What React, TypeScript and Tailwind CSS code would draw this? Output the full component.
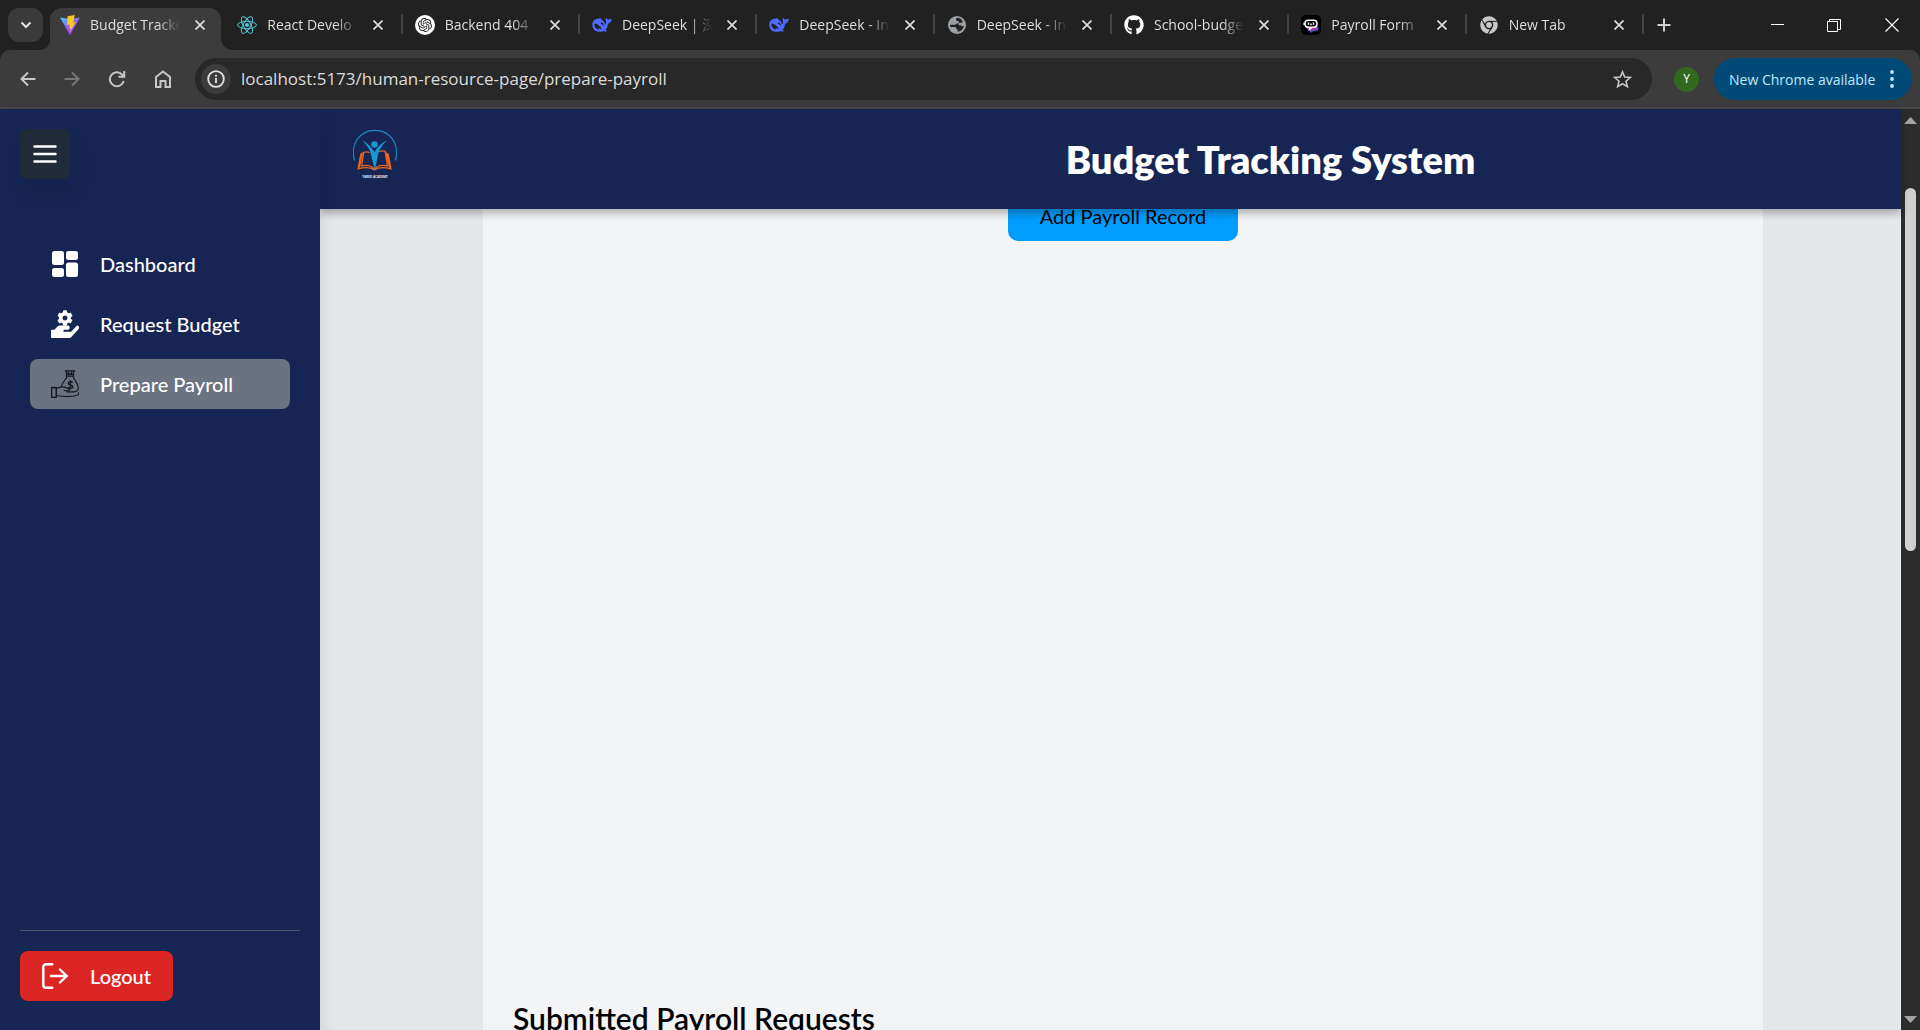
import React from "react";
import { FaChrome, FaCog, FaGithub, FaHandHolding } from "react-icons/fa";
import { SiOpenai } from "react-icons/si";

const ViteIcon = () => (
  <svg viewBox="0 0 20 20" className="size-5">
    <defs>
      <linearGradient id="viteBody" x1="0" y1="0" x2="0.6" y2="1">
        <stop offset="0" stopColor="#41d1ff" />
        <stop offset="0.5" stopColor="#8a6cf5" />
        <stop offset="1" stopColor="#bd34fe" />
      </linearGradient>
    </defs>
    <path d="M0 2.4 10 4l10-1.6L10 20Z" fill="url(#viteBody)" />
    <path d="M14.8 0 7.600 1.300 7 10l2.900-.5-.7 4.200 1.600-.5L9.900 17l5.800-10-2.600.5Z" fill="#ffc91f" />
  </svg>
);

const ReactIcon = () => (
  <svg viewBox="0 0 20 20" className="size-5" fill="none" stroke="#58c4dc" strokeWidth="1">
    <circle cx="10" cy="10" r="2" fill="#58c4dc" stroke="none" />
    <ellipse cx="10" cy="10" rx="9.4" ry="3.7" />
    <ellipse cx="10" cy="10" rx="9.4" ry="3.7" transform="rotate(60 10 10)" />
    <ellipse cx="10" cy="10" rx="9.4" ry="3.7" transform="rotate(120 10 10)" />
  </svg>
);

const OpenAiIcon = () => (
  <span className="flex size-5 items-center justify-center rounded-full bg-white">
    <SiOpenai className="size-[14px] text-[#202120]" />
  </span>
);

const WhaleIcon = () => (
  <svg viewBox="0 0 20 20" className="size-5" fill="none">
    <path
      d="M.3 9.500C.5 6 2.800 3.800 5.600 3.800c1-.1 1.500-.6 2.600-.6.700 0 .9.600.8 1.100 1.600.8 3.400 2.700 4.300 5 .6-.3.900-.9.700-1.900C13.500 5.600 13.500 4 14.200 2.800c.5 1 1.100 1.600 2 1.800 1-.1 2.200-.5 3.600-.9-.1 2.700-1.700 4.500-3.800 5.100-.1 2.600-1 4.600-2.400 6 .5.600 1.100 1 1.800 1.300-1.200.6-2.500.5-3.700-.1C7.700 18 .1 16.800.3 9.500Z"
      fill="#4d6bfe"
    />
    <path d="M2.400 8.600c3 .1 5.800 2.400 7.600 5.700-1.500-.2-2.500-1-3.200-1.300-.3 1-.2 1.400.2 1.900-2.800-.6-4.800-3.200-4.600-6.300Z" fill="#202120" />
    <path d="M8.800 8.200c1.500 0 2.500.9 2.600 2.100" stroke="#202120" strokeWidth="1.200" />
  </svg>
);

const GlobeIcon = () => (
  <svg viewBox="0 0 20 20" className="size-5">
    <circle cx="10" cy="10" r="9" fill="#9aa0a6" />
    <path d="M10.500 2.800c-1.500.7-1.800 1.600-1.300 2.500.6.900 2.200.5 2.800 1.300.5.900-.5 1.700-1.700 1.900-1.200.2-1.500 1-2.600 1.200H3c0 .8.200 1.500.4 2.200l4.400.1c1.500.1 1.200 1.800 2.200 2.200.9.400.6 1.400.6 2.600 3.300-.3 5.700-2.700 6.300-5.800-1 .3-2.100.3-2.900-.4-.9-.8-2.200-.2-2.600-1.200-.3-1 .8-1.600 2-1.600 1 .1 1.700-.2 2.300-.9C14.900 4.500 13 3.100 10.500 2.800Z" fill="#202120" />
  </svg>
);

const BotIcon = () => (
  <svg viewBox="0 0 20 20" className="size-5">
    <rect width="20" height="20" rx="5" fill="#000" />
    <path d="M6.500 12.500H18l-1 3-5 .8-3 1.700v-2.500l-2.500-.5Z" fill="#3b5bdb" />
    <path d="M5.500 11.500H17l-1.500 3-4.500.5-3 1.500v-2l-2-.5Z" fill="#c0369d" />
    <rect x="4" y="5.200" width="12" height="7" rx="3.200" fill="#000" stroke="#fff" strokeWidth="1.500" />
    <path d="M7.500 7.500v2.200M12.500 7.500v2.200M10 8.500v1.800" stroke="#fff" strokeWidth="1.500" />
    <path d="M3 7.500V10M9 12.500l-.500 2 2.500-2" stroke="#fff" strokeWidth="1.200" fill="#fff" />
  </svg>
);

const CloseGlyph = () => (
  <svg viewBox="0 0 10 10" className="size-[10px]" stroke="currentColor" strokeWidth="1.700">
    <path d="M.5.5l9 9M9.500.5l-9 9" />
  </svg>
);

const tabs: { title: string; icon: React.ReactNode }[] = [
  { title: "Budget Tracke", icon: <ViteIcon /> },
  { title: "React Develo", icon: <ReactIcon /> },
  { title: "Backend 404", icon: <OpenAiIcon /> },
  { title: "DeepSeek | 深", icon: <WhaleIcon /> },
  { title: "DeepSeek - In", icon: <WhaleIcon /> },
  { title: "DeepSeek - In", icon: <GlobeIcon /> },
  { title: "School-budge", icon: <FaGithub className="size-5 text-white" /> },
  { title: "Payroll Form", icon: <BotIcon /> },
  { title: "New Tab", icon: <FaChrome className="size-[18px] text-[#c7c7c7]" /> },
];

function Tab({ title, icon, active, divider }: { title: string; icon: React.ReactNode; active: boolean; divider: boolean }) {
  return (
    <div className="relative flex h-[34px] min-w-0 flex-1 items-center pl-[13px] pr-[19px]">
      {active && (
        <svg viewBox="0 0 194 42" preserveAspectRatio="none" className="absolute top-0 -left-2 h-[42px] w-[194px]" fill="#3c3c3c">
          <path d="M0 42c7 0 11-4 11-11V12C11 5 16 0 23 0h147c7 0 12 5 12 12v18c0 7 5 12 12 12Z" />
        </svg>
      )}
      <span className="relative flex w-5 shrink-0 justify-center">{icon}</span>
      <button
        type="button"
        className="relative ml-[10px] min-w-0 flex-1 text-left text-[14px] leading-5 whitespace-nowrap text-[#dedede] [mask-image:linear-gradient(to_right,#000_75%,transparent)]"
      >
        {title}
      </button>
      <button type="button" aria-label={"Close " + title} className="relative ml-[15px] shrink-0 text-[#dedede]">
        <CloseGlyph />
      </button>
      {divider && <span className="absolute top-[6px] -right-px h-5 w-[2px] rounded bg-[#444]" />}
    </div>
  );
}

function TabStrip() {
  return (
    <div className="flex h-[50px] items-start bg-[#202120] pt-2">
      <button type="button" aria-label="Search tabs" className="ml-2 flex h-[34px] w-[35px] shrink-0 items-center justify-center rounded-[11px] bg-[#3a3a3a] text-[#e3e3e3]">
        <svg viewBox="0 0 12 8" className="h-2 w-3" fill="none" stroke="currentColor" strokeWidth="2">
          <path d="M1.500 1.500 6 6l4.500-4.500" />
        </svg>
      </button>
      <div className="ml-1 flex min-w-0 flex-1">
        {tabs.map((tab, i) => (
          <Tab key={i} title={tab.title} icon={tab.icon} active={i === 0} divider={i > 0} />
        ))}
      </div>
      <div className="flex h-[34px] w-[277px] shrink-0 items-center text-white">
        <button type="button" aria-label="New tab" className="ml-[14px] text-[#d0d0d0]">
          <svg viewBox="0 0 14 14" className="size-[14px]" stroke="currentColor" strokeWidth="2">
            <path d="M7 .5v13M.5 7h13" />
          </svg>
        </button>
        <button type="button" aria-label="Minimize" className="ml-[100px]">
          <svg viewBox="0 0 14 14" className="size-[14px]" stroke="currentColor" strokeWidth="1" shapeRendering="crispEdges">
            <path d="M0 6.500h13" />
          </svg>
        </button>
        <button type="button" aria-label="Restore" className="ml-[42px]">
          <svg viewBox="0 0 14 14" className="size-[14px]" fill="none" stroke="currentColor" strokeWidth="1">
            <path d="M.5 3.500h10v10H.5ZM2.500 3.500v-2h11v10h-3" />
          </svg>
        </button>
        <button type="button" aria-label="Close window" className="ml-[44px]">
          <svg viewBox="0 0 14 14" className="size-[14px]" stroke="currentColor" strokeWidth="1.200">
            <path d="M.5.5l13 13M13.500.5l-13 13" />
          </svg>
        </button>
      </div>
    </div>
  );
}

function Toolbar() {
  return (
    <div className="bg-[#202120]">
      <div className="flex h-[59px] items-start rounded-t-[10px] border-b-2 border-[#474747] bg-[#3c3c3c] pt-2 pr-2 pl-5">
        <div className="flex h-[42px] shrink-0 items-center gap-7 text-[#c7c7c7]">
          <button type="button" aria-label="Back">
            <svg viewBox="0 0 16 16" className="size-4" fill="none" stroke="currentColor" strokeWidth="2">
              <path d="M15.500 8H2M8 1.500 1.500 8 8 14.500" />
            </svg>
          </button>
          <button type="button" aria-label="Forward" className="text-[#777]">
            <svg viewBox="0 0 16 16" className="size-4" fill="none" stroke="currentColor" strokeWidth="2">
              <path d="M.5 8H14M8 1.500 14.500 8 8 14.500" />
            </svg>
          </button>
          <button type="button" aria-label="Reload">
            <svg viewBox="0 0 18 18" className="size-[18px]" fill="none" stroke="currentColor" strokeWidth="2">
              <path d="M15.700 11A7 7 0 1 1 14 4.500l2 2M16.200 1v5.800H10.500" />
            </svg>
          </button>
          <button type="button" aria-label="Home">
            <svg viewBox="0 0 18 18" className="size-[18px]" fill="none" stroke="currentColor" strokeWidth="2">
              <path d="M2 7 9 1.500 16 7v10h-4.500v-6h-5v6H2Z" />
            </svg>
          </button>
        </div>
        <div className="ml-[23px] flex h-[42px] min-w-0 flex-1 items-center rounded-full bg-[#282828] pr-5 pl-[6px]">
          <button type="button" aria-label="Site information" className="flex size-[30px] shrink-0 items-center justify-center rounded-full bg-[#3c3c3c] text-[#e3e3e3]">
            <svg viewBox="0 0 18 18" className="size-[18px]" fill="none" stroke="currentColor" strokeWidth="1.800">
              <circle cx="9" cy="9" r="7.800" />
              <path d="M9 8v5M9 4.800v2" />
            </svg>
          </button>
          <label htmlFor="address" className="sr-only">Address</label>
          <input
            id="address"
            type="text"
            defaultValue="localhost:5173/human-resource-page/prepare-payroll"
            className="ml-[10px] min-w-0 flex-1 bg-transparent text-[17px] leading-6 text-[#dcdcdc] outline-none"
          />
          <button type="button" aria-label="Bookmark" className="shrink-0 text-[#c7c7c7]">
            <svg viewBox="0 0 20 20" className="size-[19px]" fill="none" stroke="currentColor" strokeWidth="1.700">
              <path d="m10 2 2.300 5.400 5.900.5-4.500 3.900 1.400 5.700-5.100-3-5.100 3 1.400-5.700L1.800 7.900l5.900-.5Z" />
            </svg>
          </button>
        </div>
        <div className="flex h-[42px] shrink-0 items-center">
          <button type="button" className="mr-[15px] ml-[22px] flex size-[25px] items-center justify-center rounded-full bg-[#33691e] text-[12px] text-white">
            Y
          </button>
          <button type="button" className="flex h-[42px] w-[198px] items-center justify-between rounded-full bg-[#004a77] pr-[18px] pl-[15px] text-[14px] whitespace-nowrap text-[#c2e7ff]">
            New Chrome available
            <svg viewBox="0 0 4 18" className="h-[18px] w-1" fill="currentColor">
              <circle cx="2" cy="2" r="1.900" />
              <circle cx="2" cy="9" r="1.900" />
              <circle cx="2" cy="16" r="1.900" />
            </svg>
          </button>
        </div>
      </div>
    </div>
  );
}

const DashboardIcon = () => (
  <svg viewBox="0 0 26 26" className="size-[26px]" fill="#fff">
    <rect width="12" height="14" rx="2.500" />
    <rect x="14" width="12" height="9" rx="2.500" />
    <rect y="17" width="12" height="9" rx="2.500" />
    <rect x="14" y="11.500" width="12" height="14.500" rx="2.500" />
  </svg>
);

const RequestIcon = () => (
  <svg viewBox="0 0 28 28" className="size-7" fill="#fff">
    <FaCog x="6" y="0" size={16} />
    <g transform="translate(0 -7.600) scale(1 1.350)">
      <FaHandHolding size={28} />
    </g>
  </svg>
);

const PayrollIcon = () => (
  <svg viewBox="0 0 28 28" className="size-7" fill="none" stroke="#15181d" strokeWidth="1.200">
    <rect x=".6" y="17.600" width="4.600" height="9.800" strokeWidth="1.500" />
    <path d="M14.500.8h9l-1.500 3.400h-6ZM17 1.500l1 2.500M21 1.500l-1 2.500M15.500 4.500h7v1.700h-7Z" />
    <path d="M16 6.500c-1 3-4.500 5.500-5.600 10M22 6.500c1.200 3.800 5.300 6.500 5.300 11.500 0 2.500-1.800 3.600-4.300 3.800H15.500" />
    <path d="M5.500 18.500c3.500-2 8.500-2 12 .2 1.500 1 .8 2.200-.8 2.100l-4-.4M5.500 25.500c6 1.200 14.500 1.800 21.500-.5 1-.8 1-2 0-2.600" />
    <path d="M21.500 12.600c-.6-1.300-4.300-1.400-4.300.7 0 2.200 4.600 1.200 4.600 3.500 0 2-4 2.100-4.900.3M19.400 10.300v9.200" strokeWidth="1.400" />
  </svg>
);

const LogoutIcon = () => (
  <svg viewBox="0 0 26 26" className="size-[26px]" fill="none" stroke="#fff" strokeWidth="2.400" strokeLinecap="round" strokeLinejoin="round">
    <path d="M10.300 1.300H4a2.700 2.700 0 0 0-2.700 2.700v18A2.700 2.700 0 0 0 4 24.700h6.300M9 13h16M18 6.500l6.700 6.500L18 19.500" />
  </svg>
);

const navItems = [
  { label: "Dashboard", icon: <DashboardIcon />, active: false },
  { label: "Request Budget", icon: <RequestIcon />, active: false },
  { label: "Prepare Payroll", icon: <PayrollIcon />, active: true },
];

function Sidebar() {
  return (
    <aside className="z-20 flex w-80 shrink-0 flex-col bg-[#172554] p-5 pb-[29px] font-[Lato,sans-serif] text-white shadow-[0_10px_15px_rgba(0,0,0,0.12)]">
      <button type="button" aria-label="Toggle menu" className="flex size-[50px] items-center justify-center rounded-lg bg-[#212b37] shadow-[5px_15px_20px_rgba(0,0,0,0.07)]">
        <svg viewBox="0 0 24 20" className="h-5 w-6" stroke="#fff" strokeWidth="2.400" strokeLinecap="round">
          <path d="M1.500 2.500h21M1.500 10h21M1.500 17.500h21" />
        </svg>
      </button>
      <nav className="mx-[10px] mt-[60px] flex flex-col gap-[10px]">
        {navItems.map((item) => (
          <a
            key={item.label}
            href="#"
            className={
              "flex h-[50px] items-center rounded-lg pl-5 text-[20px] leading-7 font-medium " + (item.active ? "bg-[#6b7280]" : "")
            }
          >
            <span className="mr-5 flex w-[30px] justify-center">{item.icon}</span>
            {item.label}
          </a>
        ))}
      </nav>
      <div className="mt-auto border-t border-[#4b5563] pt-5">
        <button type="button" className="flex h-[50px] items-center gap-[22px] rounded-lg bg-[#dc2626] px-[22px] text-[20px] leading-7 font-medium">
          <LogoutIcon />
          Logout
        </button>
      </div>
    </aside>
  );
}

const AcademyLogo = () => (
  <svg viewBox="0 0 44 50" className="h-[50px] w-11" fill="none">
    <path d="M1.500 31.500C-3 15 7 1.300 22 1.300S47 15 42.500 31.500" stroke="#1f86bd" strokeWidth="1.200" />
    <g stroke="#e8661b" strokeWidth="1.300">
      <path d="M21.500 41c-4-2.800-9.500-3-16.500-1.200l3-15.500M21.500 40c-3-3.500-8-4.300-13-3.200l2.300-13.500c2-.6 4.500-.4 5.700.4M21.500 40c3-3.500 8-4.300 13-3.200l-2.300-14.500c-2-.6-4.500-.4-5.700.4M21.500 41c4-2.800 9.500-3 16.500-1.200l-3-15.500M6.300 38.500l3-15M36.500 38.500l-3-15" />
    </g>
    <circle cx="21.500" cy="15.500" r="3.300" fill="#1b96cf" />
    <path d="M9 11.500c5 2 9 6 12.500 11.500C24.500 17.500 29 13.500 34 11.500c-4.500 4-8.500 9.500-9.300 16.500L21.800 41 18.500 28C17.500 21 14 15.500 9 11.500Z" fill="#1b96cf" />
    <text x="22" y="49" textAnchor="middle" fontSize="3" fontWeight="700" fill="#e8ecf5">YARED ACADEMY</text>
  </svg>
);

function PageHeader() {
  return (
    <header className="z-10 flex h-[100px] shrink-0 bg-[#172554] shadow-[0_4px_8px_rgba(0,0,0,0.3)]">
      <div className="w-80 shrink-0 pt-5 pl-[33px]">
        <AcademyLogo />
      </div>
      <h1 className="flex-1 pt-5 text-center font-[Lato,sans-serif] text-[38px] leading-[60px] font-extrabold text-white">
        Budget Tracking System
      </h1>
    </header>
  );
}

function ScrollBar() {
  return (
    <div className="flex w-[19px] shrink-0 flex-col items-center bg-[#2c2c2c] pt-2 pb-[7px]">
      <svg viewBox="0 0 13 7" className="h-[7px] w-[13px]" fill="#a3a3a3"><path d="M0 7 6.500 0 13 7Z" /></svg>
      <div className="mt-16 h-[363px] w-[11px] rounded-full bg-[#d0d0d0]" />
      <svg viewBox="0 0 13 7" className="mt-auto h-[7px] w-[13px]" fill="#a3a3a3"><path d="M0 0 6.500 7 13 0Z" /></svg>
    </div>
  );
}

export default function App() {
  return (
    <div className="flex h-screen flex-col overflow-hidden font-['Open_Sans','Noto_Sans_CJK_SC',sans-serif]">
      <TabStrip />
      <Toolbar />
      <div className="flex min-h-0 flex-1">
        <Sidebar />
        <div className="flex min-w-0 flex-1 flex-col">
          <PageHeader />
          <main className="min-h-0 flex-1 overflow-hidden bg-[#e5e7eb] pl-[25px] font-[Lato,sans-serif] text-black">
            <section className="mx-auto -mt-[18px] min-h-full max-w-[1280px] bg-[#f3f4f6] px-[30px] pb-10">
              <div className="flex justify-center">
                <button type="button" className="h-[50px] w-[230px] rounded-[10px] bg-[#009dff] text-[20px] leading-7">
                  Add Payroll Record
                </button>
              </div>
              <h2 className="mt-[755px] text-[30px] leading-[45px] font-semibold">Submitted Payroll Requests</h2>
            </section>
          </main>
        </div>
        <ScrollBar />
      </div>
    </div>
  );
}
